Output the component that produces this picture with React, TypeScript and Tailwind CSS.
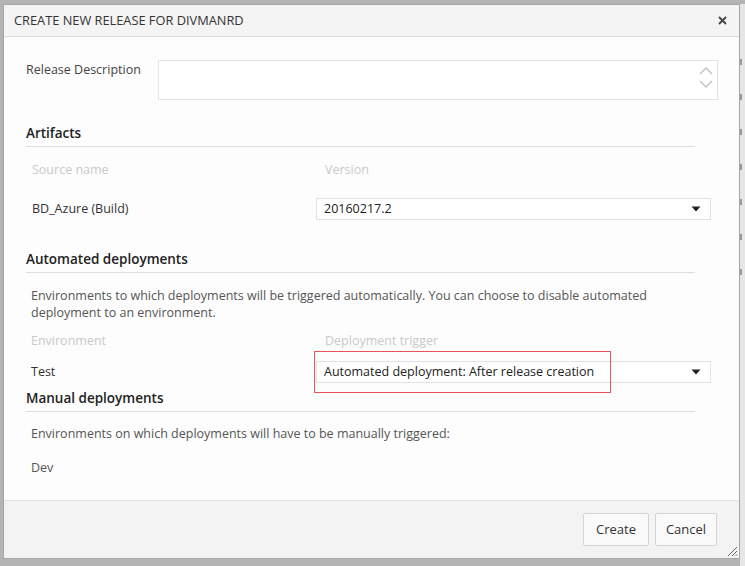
import React from "react";

const font = { fontFamily: '"Open Sans", "Noto Sans", sans-serif' };

function Caret() {
  return (
    <svg width="10" height="6" viewBox="0 0 10 6" className="shrink-0">
      <path d="M0.5 0.5 L9.5 0.5 L5 5.5 Z" fill="#222" />
    </svg>
  );
}

function Select({ value }: { value: string }) {
  return (
    <div className="flex h-[22px] w-[395px] items-center justify-between border border-[#e2e2e2] bg-white pl-[7px] pr-[9px] text-[12.5px] text-[#222]">
      <span>{value}</span>
      <Caret />
    </div>
  );
}

function Heading({ children }: { children: React.ReactNode }) {
  return (
    <div className="w-[669px] border-b border-[#dedede] pb-[3px] text-[13.5px] font-semibold leading-[20px] text-[#222]">
      {children}
    </div>
  );
}

export default function App() {
  return (
    <div className="flex h-[566px] w-[745px] overflow-hidden bg-[#b4b4b4] pl-[3px] pt-[4px]" style={font}>
      <div className="flex h-[555px] w-[737px] flex-col border border-[#a5a5a5] bg-[#fdfdfd]">
        {/* title bar */}
        <div className="flex h-[32px] shrink-0 items-center justify-between border-b border-[#dcdcdc] bg-[#f4f4f4] pl-[10px] pr-[12px]">
          <span className="text-[12.8px] text-[#333]">CREATE NEW RELEASE FOR DIVMANRD</span>
          <svg width="9" height="9" viewBox="0 0 9 9">
            <path d="M1 1 L8 8 M8 1 L1 8" stroke="#444" strokeWidth="1.8" />
          </svg>
        </div>

        {/* body */}
        <div className="relative flex flex-1 flex-col pl-[22px] text-[12.5px] text-[#444]">
          <div className="mt-[23px] flex">
            <div className="w-[132px] pt-[2px] leading-[16px]">Release Description</div>
            <div className="flex h-[40px] w-[560px] justify-end border border-[#e3e3e3] bg-white pr-[4px]">
              <div className="flex flex-col items-center gap-[5px] pt-[5px]">
                <svg width="14" height="9" viewBox="0 0 14 9">
                  <path d="M1 8 L7 2 L13 8" stroke="#c4c4c4" strokeWidth="1.5" fill="none" />
                </svg>
                <svg width="14" height="9" viewBox="0 0 14 9">
                  <path d="M1 1 L7 7 L13 1" stroke="#c4c4c4" strokeWidth="1.5" fill="none" />
                </svg>
              </div>
            </div>
          </div>

          <div className="mt-[23px]">
            <Heading>Artifacts</Heading>
          </div>
          <div className="mt-[15px] flex leading-[16px] text-[#c9c9c9]">
            <div className="w-[290px] pl-[6px]">Source name</div>
            <div className="pl-[9px]">Version</div>
          </div>
          <div className="mt-[20px] flex items-center">
            <div className="w-[290px] pl-[6px] text-[#333]">BD_Azure (Build)</div>
            <Select value="20160217.2" />
          </div>

          <div className="mt-[29px]">
            <Heading>Automated deployments</Heading>
          </div>
          <div className="mt-[14px] w-[680px] pl-[5px] leading-[17px] text-[#555]">
            Environments to which deployments will be triggered automatically. You can choose to disable automated
            <br />
            deployment to an environment.
          </div>
          <div className="mt-[12px] flex leading-[16px] text-[#c9c9c9]">
            <div className="w-[290px] pl-[5px]">Environment</div>
            <div className="pl-[9px]">Deployment trigger</div>
          </div>
          <div className="relative mt-[12px] flex items-center">
            <div className="w-[290px] pl-[5px] text-[#333]">Test</div>
            <Select value="Automated deployment: After release creation" />
            <div className="pointer-events-none absolute left-[288px] top-[-10px] h-[42px] w-[297px] border-[1.5px] border-[#e4555c]" />
          </div>

          <div className="mt-[5px]">
            <Heading>Manual deployments</Heading>
          </div>
          <div className="mt-[14px] pl-[5px] leading-[16px] text-[#555]">
            Environments on which deployments will have to be manually triggered:
          </div>
          <div className="mt-[18px] pl-[5px] leading-[16px] text-[#555]">Dev</div>
        </div>

        {/* footer */}
        <div className="relative flex h-[58px] shrink-0 items-start justify-end gap-[6px] border-t border-[#e2e2e2] bg-[#f3f3f3] pr-[22px] pt-[12px]">
          <button className="h-[33px] w-[66px] rounded-[2px] border border-[#d4d4d4] bg-[#fafafa] text-[13px] text-[#333]">
            Create
          </button>
          <button className="h-[33px] w-[62px] rounded-[2px] border border-[#d4d4d4] bg-[#fafafa] text-[13px] text-[#333]">
            Cancel
          </button>
          <svg width="12" height="12" viewBox="0 0 12 12" className="absolute bottom-[1px] right-[1px]">
            <path d="M11 2 L2 11 M11 6 L6 11 M11 9.5 L9.5 11" stroke="#666" strokeWidth="1" />
          </svg>
        </div>
      </div>
      <div className="flex h-full w-[5px] flex-col gap-[29px] bg-[#e6e6e6] pt-[55px]">
        <div className="h-[6px] w-[2px] bg-[#999]" />
        <div className="h-[6px] w-[2px] bg-[#999]" />
        <div className="h-[6px] w-[2px] bg-[#999]" />
        <div className="h-[6px] w-[2px] bg-[#999]" />
        <div className="h-[6px] w-[2px] bg-[#999]" />
        <div className="h-[6px] w-[2px] bg-[#999]" />
        <div className="h-[6px] w-[2px] bg-[#999]" />
      </div>
    </div>
  );
}
